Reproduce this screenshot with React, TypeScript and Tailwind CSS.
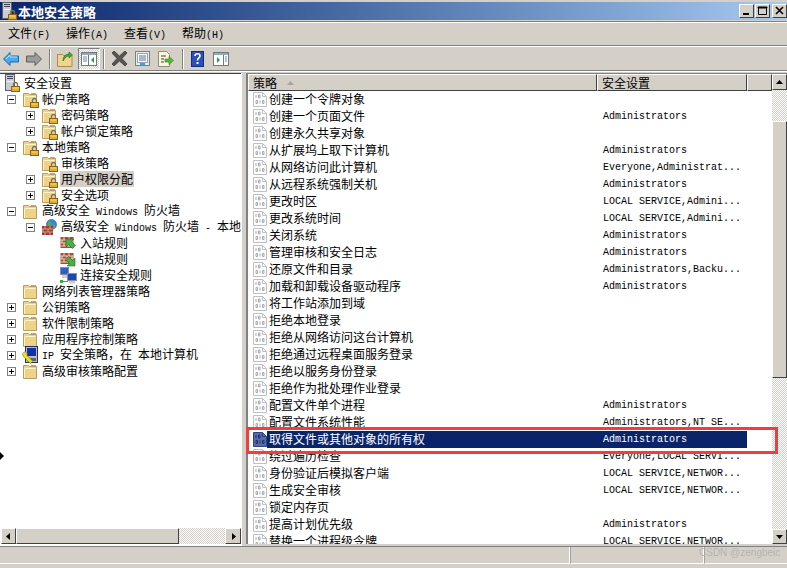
import React from "react";

function T({ children }: { children: string }) {
  const parts = children.split(/([\x00-\x7f]+)/).filter(Boolean);
  return (
    <>
      {parts.map((p, i) =>
        /^[\x00-\x7f]+$/.test(p) ? (
          <span key={i} className="font-['Liberation_Mono',monospace] text-[10px] whitespace-pre">{p}</span>
        ) : (
          <span key={i}>{p}</span>
        )
      )}
    </>
  );
}

function Lock({ x = 8, y = 8 }: { x?: number; y?: number }) {
  return (
    <g transform={`translate(${x} ${y})`}>
      <path d="M2.500 4.500V2.500a2 2 0 0 1 4 0V4.500" fill="none" stroke="#7c7458" strokeWidth="1.300" />
      <rect x="0.500" y="4.500" width="8" height="5" fill="#e2ae2e" stroke="#8e6210" />
      <rect x="1.500" y="5.500" width="6" height="1" fill="#f8dc80" />
    </g>
  );
}

function Folder({ lock = true }: { lock?: boolean }) {
  return (
    <svg width="17" height="17" viewBox="0 0 17 17" className="shrink-0">
      <path d="M1.500 15.500V2.500h5l1 1h7v12z" fill="#efd28a" stroke="#b89c60" />
      <rect x="2.500" y="5" width="11" height="1" fill="#fff3c8" />
      <rect x="2" y="6" width="1" height="9" fill="#fff3c8" />
      <rect x="9" y="2" width="5" height="1" fill="#8ab0d8" />
      {lock && <Lock x={8} y={7} />}
    </svg>
  );
}

function Server() {
  return (
    <svg width="17" height="19" viewBox="0 0 17 19" className="shrink-0">
      <rect x="1.500" y="0.500" width="9" height="16" fill="#c8ccd4" stroke="#5a6070" />
      <rect x="3" y="2" width="6" height="1" fill="#3c4454" />
      <rect x="3" y="4" width="6" height="1" fill="#3c4454" />
      <rect x="3" y="7" width="6" height="1" fill="#f4f4f4" />
      <Lock x={7} y={8} />
    </svg>
  );
}

function Wall({ arrow }: { arrow?: "in" | "out" }) {
  return (
    <svg width="17" height="17" viewBox="0 0 17 17" className="shrink-0">
      <rect x="0.500" y="2" width="13" height="11" fill="#a84a34" />
      <path d="M0.500 5h13M0.500 8h13M0.500 11h13M4 2v3M9 2v3M2 5v3M7 5v3M12 5v3M4 8v3M9 8v3" stroke="#e8d8c8" strokeWidth="1" fill="none" />
      {arrow === "in" && <path d="M6 4h8l-2.500 2.500 4 4-3 3-4-4L6 12z" fill="#48b048" stroke="#207020" strokeWidth="0.600" />}
      {arrow === "out" && <path d="M15 15H7l2.500-2.500-4-4 3-3 4 4L15 7z" fill="#48b048" stroke="#207020" strokeWidth="0.600" />}
    </svg>
  );
}

function WallGlobe() {
  return (
    <svg width="17" height="17" viewBox="0 0 17 17" className="shrink-0">
      <circle cx="10.500" cy="5.500" r="5" fill="#3c88d8" stroke="#1c5098" strokeWidth="0.600" />
      <path d="M7 3c2-1 3 0 3 2s-2 2-3 1zM12 6c1-1 3 0 2 2s-2 1-2 0z" fill="#58b048" />
      <rect x="1" y="7" width="11" height="9" fill="#a03c2c" />
      <path d="M1 10h11M1 13h11M4 7v3M9 7v3M2 10v3M7 10v3M4 13v3M9 13v3" stroke="#d8b8a8" strokeWidth="0.800" />
    </svg>
  );
}

function Monitors() {
  return (
    <svg width="17" height="17" viewBox="0 0 17 17" className="shrink-0">
      <rect x="0.500" y="0.500" width="8" height="7" fill="#2860d0" stroke="#8890a0" />
      <rect x="2" y="8" width="5" height="3" fill="#c8ccd4" />
      <rect x="7.500" y="6.500" width="9" height="7" fill="#1848b8" stroke="#8890a0" />
      <rect x="9" y="14" width="6" height="2.500" fill="#c8ccd4" />
      <rect x="0" y="13" width="3" height="3" fill="#30b030" />
      <path d="M3 14.500h5" stroke="#30b030" />
    </svg>
  );
}

function IpIcon() {
  return (
    <svg width="17" height="18" viewBox="0 0 17 18" className="shrink-0">
      <rect x="3.500" y="0.500" width="12" height="16" fill="#b8bcc4" stroke="#30343c" />
      <rect x="5" y="2" width="9" height="8" fill="#1030b0" />
      <rect x="5" y="12" width="9" height="3" fill="#606470" />
      <path d="M0.500 8l2.500-2.500 2.500 2.500-1 1 6 6-2 2.500-6-6-1-1z" fill="#f0e020" stroke="#807810" strokeWidth="0.600" />
    </svg>
  );
}

function Policy({ selected }: { selected?: boolean }) {
  const ink = selected ? "#20306c" : "#a4a8b0";
  const line = selected ? "#30407c" : "#bcc0c4";
  return (
    <svg width="14" height="15" viewBox="0 0 14 15" className="shrink-0">
      <path d="M0.500 0.500h9l4 4v10H0.500z" fill={selected ? "#5a6aa8" : "#fff"} stroke={line} />
      <path d="M9.500 0.500v4h4" fill="none" stroke={line} />
      <path d="M3 3v3M5.500 3h1.500v3H5.500zM3 8.500h1.500v3H3zM7 8.500v3M9.500 8.500h1.500v3H9.500z" fill="none" stroke={ink} strokeWidth="1" />
    </svg>
  );
}

function Box({ open }: { open?: boolean }) {
  return (
    <div className="relative w-[9px] h-[9px] border border-[#808080] bg-white shrink-0">
      <div className="absolute left-[1px] top-[3px] w-[5px] h-px bg-black" />
      {!open && <div className="absolute left-[3px] top-[1px] w-px h-[5px] bg-black" />}
    </div>
  );
}

type Node = {
  level: 0 | 1 | 2;
  box?: "open" | "closed";
  icon: React.ReactNode;
  text: string;
  sel?: boolean;
};

const tree: Node[] = [
  { level: 0, box: "open", icon: <Folder />, text: "帐户策略" },
  { level: 1, box: "closed", icon: <Folder />, text: "密码策略" },
  { level: 1, box: "closed", icon: <Folder />, text: "帐户锁定策略" },
  { level: 0, box: "open", icon: <Folder />, text: "本地策略" },
  { level: 1, icon: <Folder />, text: "审核策略" },
  { level: 1, box: "closed", icon: <Folder />, text: "用户权限分配", sel: true },
  { level: 1, box: "closed", icon: <Folder />, text: "安全选项" },
  { level: 0, box: "open", icon: <Folder lock={false} />, text: "高级安全 Windows 防火墙" },
  { level: 1, box: "open", icon: <WallGlobe />, text: "高级安全 Windows 防火墙 - 本地" },
  { level: 2, icon: <Wall arrow="in" />, text: "入站规则" },
  { level: 2, icon: <Wall arrow="out" />, text: "出站规则" },
  { level: 2, icon: <Monitors />, text: "连接安全规则" },
  { level: 0, icon: <Folder lock={false} />, text: "网络列表管理器策略" },
  { level: 0, box: "closed", icon: <Folder lock={false} />, text: "公钥策略" },
  { level: 0, box: "closed", icon: <Folder lock={false} />, text: "软件限制策略" },
  { level: 0, box: "closed", icon: <Folder lock={false} />, text: "应用程序控制策略" },
  { level: 0, box: "closed", icon: <IpIcon />, text: "IP 安全策略，在 本地计算机" },
  { level: 0, box: "closed", icon: <Folder lock={false} />, text: "高级审核策略配置" },
];

const rows: [string, string][] = [
  ["创建一个令牌对象", ""],
  ["创建一个页面文件", "Administrators"],
  ["创建永久共享对象", ""],
  ["从扩展坞上取下计算机", "Administrators"],
  ["从网络访问此计算机", "Everyone,Administrat..."],
  ["从远程系统强制关机", "Administrators"],
  ["更改时区", "LOCAL SERVICE,Admini..."],
  ["更改系统时间", "LOCAL SERVICE,Admini..."],
  ["关闭系统", "Administrators"],
  ["管理审核和安全日志", "Administrators"],
  ["还原文件和目录", "Administrators,Backu..."],
  ["加载和卸载设备驱动程序", "Administrators"],
  ["将工作站添加到域", ""],
  ["拒绝本地登录", ""],
  ["拒绝从网络访问这台计算机", ""],
  ["拒绝通过远程桌面服务登录", ""],
  ["拒绝以服务身份登录", ""],
  ["拒绝作为批处理作业登录", ""],
  ["配置文件单个进程", "Administrators"],
  ["配置文件系统性能", "Administrators,NT SE..."],
  ["取得文件或其他对象的所有权", "Administrators"],
  ["绕过遍历检查", "Everyone,LOCAL SERVI..."],
  ["身份验证后模拟客户端", "LOCAL SERVICE,NETWOR..."],
  ["生成安全审核", "LOCAL SERVICE,NETWOR..."],
  ["锁定内存页", ""],
  ["提高计划优先级", "Administrators"],
  ["替换一个进程级令牌", "LOCAL SERVICE,NETWOR..."],
];

const raised = "border border-t-white border-l-white border-r-[#404040] border-b-[#404040] bg-[#d4d0c8]";
const track = "bg-[repeating-conic-gradient(#d4d0c8_0_25%,#ffffff_0_50%)] bg-[length:2px_2px]";

function ScrollBtn({ dir, className }: { dir: "up" | "down" | "left" | "right"; className: string }) {
  const d = { up: "M1 6L4.500 2 8 6z", down: "M1 3l3.500 4L8 3z", left: "M6 1L2 4.500 6 8z", right: "M3 1l4 3.500L3 8z" }[dir];
  return (
    <div className={`${raised} ${className} shrink-0 flex items-center justify-center`}>
      <svg width="9" height="9" viewBox="0 0 9 9"><path d={d} fill="#000" /></svg>
    </div>
  );
}

function WinBtn({ children, className = "" }: { children: React.ReactNode; className?: string }) {
  return (
    <div className={`w-[15px] h-[14px] ${raised} flex items-center justify-center ${className}`}>
      <svg width="11" height="10" viewBox="0 0 11 10">{children}</svg>
    </div>
  );
}

function Sep({ className }: { className: string }) {
  return <div className={`w-[2px] h-[20px] border-l border-[#808080] bg-white shrink-0 ${className}`} />;
}

function Toolbar() {
  return (
    <div className="h-[23px] flex items-center">
      <svg width="16" height="14" viewBox="0 0 16 14" className="ml-[3px] shrink-0">
        <path d="M0.500 7L7 0.500v3.500h8.500v6H7v3.500z" fill="#4ca8ec" stroke="#1868b8" />
        <path d="M3 7L7 3v2h7" fill="none" stroke="#b4e0fc" />
      </svg>
      <svg width="16" height="14" viewBox="0 0 16 14" className="ml-[7px] shrink-0">
        <path d="M15.500 7L9 0.500v3.500H0.500v6H9v3.500z" fill="#9c9c98" stroke="#5c5c5c" />
      </svg>
      <Sep className="ml-[7px]" />
      <svg width="16" height="16" viewBox="0 0 16 16" className="ml-[6px] shrink-0">
        <path d="M0.500 5V3.500h5l1 1h8.500v11H0.500z" fill="#f0d48c" stroke="#a88c50" />
        <path d="M6 10C6 5 9 3 12 3V1l3.500 3L12 7V5C9 5 8 7 6 10z" fill="#44a838" stroke="#1c6c1c" strokeWidth="0.600" />
      </svg>
      <div className="ml-[5px] w-[22px] h-[22px] shrink-0 border border-t-[#808080] border-l-[#808080] border-r-white border-b-white flex items-center justify-center bg-[repeating-conic-gradient(#d4d0c8_0_25%,#ffffff_0_50%)] bg-[length:2px_2px]">
        <svg width="16" height="14" viewBox="0 0 16 14">
          <rect x="0.500" y="0.500" width="15" height="13" fill="#fff" stroke="#707880" />
          <rect x="1" y="1" width="14" height="2" fill="#98a8b8" />
          <path d="M7.500 3v10" stroke="#707880" />
          <path d="M2 5h4M2 7h4M2 9h4" stroke="#6888b0" />
          <path d="M13 5v6l-3-3z" fill="#28a048" />
        </svg>
      </div>
      <Sep className="ml-[3px]" />
      <svg width="17" height="15" viewBox="0 0 17 15" className="ml-[6px] shrink-0">
        <path d="M1 2l2-2 5.500 5L14 0l2 2-5 5.500 5 5.500-2 2-5.500-5L3 15l-2-2 5-5.500z" fill="#585450" stroke="#403c3c" strokeWidth="0.800" />
      </svg>
      <svg width="15" height="15" viewBox="0 0 15 15" className="ml-[7px] shrink-0">
        <rect x="0.500" y="0.500" width="14" height="14" fill="#e8ecf0" stroke="#788088" />
        <rect x="2.500" y="2.500" width="10" height="9" fill="#fff" stroke="#98a0a8" />
        <path d="M4 5h7M4 7h7M4 9h7" stroke="#4870a8" />
        <rect x="5" y="12" width="5" height="2" fill="#30a8e0" />
      </svg>
      <svg width="16" height="16" viewBox="0 0 16 16" className="ml-[8px] shrink-0">
        <path d="M0.500 0.500h8l3 3v12H0.500z" fill="#fbf6dc" stroke="#908c78" />
        <path d="M3 5h5M3 8h3M3 11h3" stroke="#404040" />
        <path d="M7 8h4V5.500l4.500 4-4.500 4V11H7z" fill="#58b838" stroke="#2c7c20" strokeWidth="0.600" />
      </svg>
      <Sep className="ml-[8px]" />
      <svg width="13" height="16" viewBox="0 0 13 16" className="ml-[7px] shrink-0">
        <rect x="0.500" y="0.500" width="12" height="15" fill="#2c50b8" stroke="#142c80" />
        <path d="M4 5c0-3 5-3 5 0 0 2-2.500 2-2.500 4.500" fill="none" stroke="#fff" strokeWidth="1.600" />
        <rect x="5.500" y="11" width="2" height="2" fill="#fff" />
      </svg>
      <svg width="16" height="14" viewBox="0 0 16 14" className="ml-[9px] shrink-0">
        <rect x="0.500" y="0.500" width="15" height="13" fill="#fff" stroke="#707880" />
        <rect x="1" y="1" width="14" height="2" fill="#98a8b8" />
        <path d="M10.500 3v10" stroke="#707880" />
        <path d="M12 5h2M12 7h2M12 9h2" stroke="#6888b0" />
        <path d="M4 5v6l3-3z" fill="#28a048" />
      </svg>
    </div>
  );
}

export default function App() {
  return (
    <div className="relative w-[787px] h-[568px] overflow-hidden bg-[#d4d0c8] text-black text-[12px] leading-none font-['Noto_Sans_CJK_SC',sans-serif] flex flex-col">
      {/* title */}
      <div className="mt-[2px] h-[18px] flex items-center bg-gradient-to-r from-[#0a246a] to-[#a6caf0] shrink-0">
        <div className="ml-[1px] h-[18px] overflow-hidden"><Server /></div>
        <span className="ml-0 text-white font-bold text-[13px]">本地安全策略</span>
        <div className="ml-auto flex">
          <WinBtn><rect x="2" y="7" width="6" height="2" fill="#000" /></WinBtn>
          <WinBtn className="ml-px"><path d="M1.500 1.500h8v7h-8z M1 1h9v1H1z" fill="none" stroke="#000" /></WinBtn>
          <WinBtn className="ml-[2px]"><path d="M2 1l7 7M9 1L2 8" stroke="#000" strokeWidth="1.600" /></WinBtn>
        </div>
      </div>
      <div className="mt-px h-[2px] border-t border-[#808080] bg-white shrink-0" />
      {/* menu */}
      <div className="h-[22px] flex items-center gap-[16px] pl-[8px] shrink-0">
        {["文件(F)", "操作(A)", "查看(V)", "帮助(H)"].map((m) => (
          <span key={m}><T>{m}</T></span>
        ))}
      </div>
      <div className="h-[2px] border-t border-[#808080] bg-white shrink-0" />
      <Toolbar />
      <div className="h-[2px] border-t border-[#808080] bg-white shrink-0" />
      <div className="h-px shrink-0" />
      {/* panes */}
      <div className="h-[473px] flex shrink-0">
        <div className="w-[241px] flex flex-col border-t border-[#404040] bg-white shrink-0">
          <div className="flex-1 pt-px overflow-hidden">
            <div className="h-4 flex items-center pl-[4px]">
              <Server />
              <span className="ml-[3px] whitespace-nowrap">安全设置</span>
            </div>
            {tree.map((n) => (
              <div
                key={n.text}
                className={`h-4 flex items-center whitespace-nowrap ${n.level === 0 ? "pl-[7px]" : n.level === 1 ? "pl-[26px]" : "pl-[45px]"}`}
              >
                <div className="w-[9px] shrink-0">{n.box && <Box open={n.box === "open"} />}</div>
                <div className="ml-[6px] w-[18px] shrink-0">{n.icon}</div>
                <span className={`ml-px h-4 flex items-center px-px ${n.sel ? "bg-[#d4d0c8]" : ""}`}><span><T>{n.text}</T></span></span>
              </div>
            ))}
          </div>
          <div className="h-[16px] flex pl-px shrink-0 bg-white">
            <ScrollBtn dir="left" className="w-[15px]" />
            <div className={`${raised} w-[163px]`} />
            <div className={`flex-1 ${track}`} />
            <ScrollBtn dir="right" className="w-[16px]" />
          </div>
          <div className="h-[2px] shrink-0 bg-white" />
        </div>
        <div className="w-px bg-white shrink-0" />
        <div className="w-[4px] shrink-0" />
        <div className="flex-1 flex border-t border-l-2 border-[#808080] bg-white min-w-0 mb-[2px]">
          <div className="flex-1 flex flex-col min-w-0 overflow-hidden">
            <div className="h-[17px] flex shrink-0 bg-[#d4d0c8]">
              <div className={`${raised} w-[349px] flex items-center pl-[4px]`}>
                <span>策略</span>
                <svg width="7" height="4" viewBox="0 0 7 4" className="ml-[10px]"><path d="M0 4L3.500 0 7 4z" fill="#a8a49c" /></svg>
              </div>
              <div className={`${raised} w-[150px] flex items-center pl-[4px]`}>安全设置</div>
              <div className={`${raised} flex-1`} />
            </div>
            <div className="flex-1 overflow-hidden">
              {rows.map(([name, val]) => {
                const sel = name === "取得文件或其他对象的所有权";
                return (
                  <div key={name} className="h-[17px] flex shrink-0">
                    <div className="w-[349px] flex items-center pl-[5px] shrink-0">
                      <Policy selected={sel} />
                      <span className={`pl-[2px] pb-[2px] h-[17px] flex items-center flex-1 ${sel ? "bg-[#0a246a] text-white" : ""}`}>{name}</span>
                    </div>
                    <div className={`w-[150px] pl-[6px] pt-[1px] flex items-center font-['Liberation_Mono',monospace] text-[10px] whitespace-pre ${sel ? "bg-[#0a246a] text-white" : ""}`}>{val}</div>
                  </div>
                );
              })}
            </div>
          </div>
          <div className="w-[15px] flex flex-col shrink-0">
            <ScrollBtn dir="up" className="h-[16px]" />
            <div className={`h-[31px] shrink-0 ${track}`} />
            <div className={`${raised} h-[257px] shrink-0`} />
            <div className={`flex-1 ${track}`} />
            <ScrollBtn dir="down" className="h-[15px]" />
          </div>
        </div>
      </div>
      {/* status */}
      <div className="flex-1 border-t border-[#808080] flex">
        <div className="w-[570px] h-[17px] border-b border-r border-white" />
        <div className="w-[134px] h-[17px] border-l border-r border-b border-l-[#a0a0a0] border-r-white border-b-white" />
        <div className="flex-1 h-[17px] border-l border-b border-l-[#a0a0a0] border-b-white" />
      </div>
      {/* overlays */}
      <div className="absolute left-[246px] top-[427px] w-[532px] h-[27px] border-[3px] border-[#f43c3c]" />
      <svg width="4" height="8" viewBox="0 0 4 8" className="absolute left-0 top-[452px]"><path d="M0 0L4 4 0 8z" fill="#000" /></svg>
      <div className="absolute left-[699px] top-[547px] font-['Liberation_Sans',sans-serif] text-[10px] leading-[12px] text-[#b4b4b0]">CSDN @zengbeic</div>
    </div>
  );
}
